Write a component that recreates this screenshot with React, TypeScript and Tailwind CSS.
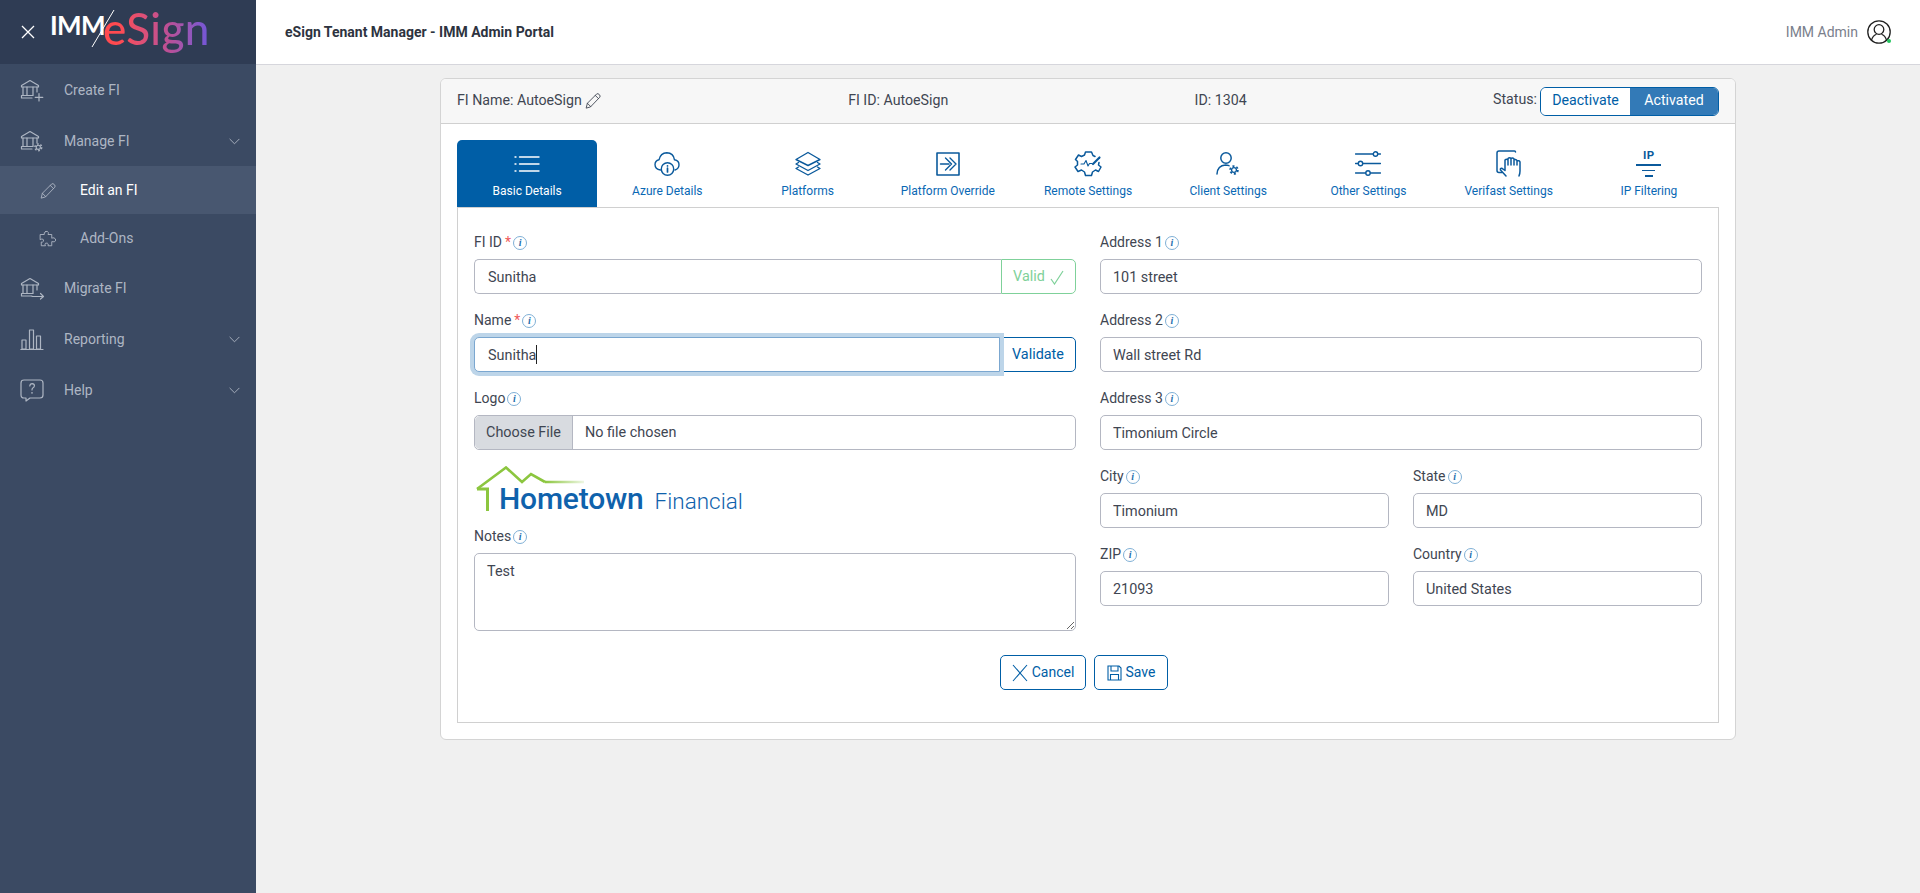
import React from "react";

const font = { fontFamily: "Roboto, sans-serif" };

function Svg({ size = 24, w, h, vb = "0 0 24 24", sw = 1.4, children, className = "" }: any) {
  return (
    <svg width={w ?? size} height={h ?? size} viewBox={vb} fill="none" stroke="currentColor" strokeWidth={sw} strokeLinecap="round" strokeLinejoin="round" className={className}>
      {children}
    </svg>
  );
}

const Gear = ({ cx, cy, k = 1 }: { cx: number; cy: number; k?: number }) => (
  <>
    <circle cx={cx} cy={cy} r={2.1 * k} strokeWidth={1.1 * k} />
    <circle cx={cx} cy={cy} r={3.4 * k} strokeWidth={1.5 * k} strokeDasharray={`${1.78 * k} ${1.78 * k}`} strokeLinecap="butt" />
  </>
);

const BankBase = () => (
  <>
    <path d="M1.5 7.5 L10 2.5 L18.5 7.5 V9 H1.5 Z" />
    <path d="M3 9 V17 M7 9 V17 M13 9 V17 M17 9 V14" />
    <path d="M1.5 17.5 H13 M1.5 17.5 V20 H12" />
  </>
);
const IconCreate = () => (
  <Svg w={24} h={24} vb="0 0 24 24" sw={1.2}>
    <BankBase />
    <path d="M19 15.5 V23 M15.2 19.3 H22.8" />
  </Svg>
);
const IconManage = () => (
  <Svg w={24} h={24} sw={1.2}>
    <BankBase />
    <Gear cx={18.3} cy={18.3} />
  </Svg>
);
const IconMigrate = () => (
  <Svg w={26} h={24} vb="0 0 26 24" sw={1.2}>
    <BankBase />
    <path d="M12 20.5 H23.5 M20.5 17.5 L23.5 20.5 L20.5 23" />
  </Svg>
);
const IconReport = () => (
  <Svg w={24} h={24} sw={1.2}>
    <path d="M2 13 H6 V22 H2 Z M9.5 3 H13.5 V22 H9.5 Z M16.5 9 H20.5 V22 H16.5 Z M.8 22.5 H23" />
  </Svg>
);
const IconHelp = () => (
  <Svg w={24} h={24} sw={1.2}>
    <path d="M4 2 H20 Q23 2 23 5 V17 Q23 20 20 20 H10 L6 23 V20 H4 Q1 20 1 17 V5 Q1 2 4 2 Z" />
    <path d="M9.8 8 Q10 5.6 12.2 5.6 Q14.4 5.7 14.4 7.8 Q14.4 9.2 12.8 10 Q12 10.5 12 12" />
    <path d="M12 14.8 V15" strokeWidth={1.6} />
  </Svg>
);
const IconPencil = ({ size = 18 }: { size?: number }) => (
  <Svg size={size} sw={1.2}>
    <path d="M3 21 L4.5 15 L17 2.5 Q18.5 1.5 20.5 3.5 Q22.3 5.5 21 7 L9 19.5 Z" />
    <path d="M15 4.5 L19.3 8.8 M4.5 15 L9 19.5" />
  </Svg>
);
const IconPuzzle = () => (
  <Svg size={18} sw={1.2}>
    <path d="M9 2 Q12 1 12.5 3.5 Q12.5 5 12 6 H17 V11 Q18 10.3 20 10.5 Q23 11.5 22 14.5 Q21 16.5 17 15.5 V21 H12 Q13 18 11 17.5 Q8 17 8 19 Q8 20 8.7 21 H3 V16 Q5 16.5 6 15 Q6.5 12 4 12 Q3 12 1.5 13 V6 H7 Q6 3 9 2 Z" />
  </Svg>
);
const Chevron = () => (
  <Svg size={11} sw={1} vb="0 0 12 12">
    <path d="M1 3.5 L6 8.5 L11 3.5" />
  </Svg>
);

function SideItem({ icon, label, chevron }: { icon: React.ReactNode; label: string; chevron?: boolean }) {
  return (
    <div className="flex h-[51px] items-center pl-[20px] pr-[16px] pt-px text-[14px] text-[#aeb6c3]">
      <span className="flex w-[44px] shrink-0 items-center">{icon}</span>
      <span className="flex-1">{label}</span>
      {chevron && <Chevron />}
    </div>
  );
}
function SubItem({ icon, label, active }: { icon: React.ReactNode; label: string; active?: boolean }) {
  return (
    <div className={`flex h-[48px] items-center pl-[39px] pt-px text-[14px] ${active ? "bg-[#485770] text-white" : "text-[#aeb6c3]"}`}>
      <span className={`flex w-[41px] shrink-0 items-center ${active ? "text-[#aeb6c3]" : ""}`}>{icon}</span>
      <span>{label}</span>
    </div>
  );
}

function Logo() {
  return (
    <div className="relative ml-[15px] flex h-[64px] w-[160px] items-start" style={{ fontFamily: "Lato, sans-serif" }}>
      <span className="mt-[10px] text-[26px] font-bold leading-[30px] tracking-[-0.6px] text-white">IMM</span>
      <svg width="24" height="39" viewBox="0 0 24 39" className="absolute left-[41px] top-[9px]">
        <path d="M1 38 L23 1" stroke="#fff" strokeWidth="1" />
      </svg>
      <span className="-ml-[2px] mt-[3px] bg-linear-to-r from-[#ff4a50] from-[15%] via-[#b94f97] via-[62%] to-[#6f55db] bg-clip-text text-[44px] font-medium leading-[50px] tracking-[0.4px] text-transparent">eSign</span>
    </div>
  );
}

function Sidebar() {
  return (
    <aside className="w-[256px] shrink-0 bg-[#3b4a63]" style={font}>
      <div className="flex h-[64px] items-center bg-[#2f3c54] pl-[21px]">
        <svg width="14" height="14" viewBox="0 0 14 14" stroke="#fff" strokeWidth="1.3" className="shrink-0">
          <path d="M1 1 L13 13 M13 1 L1 13" />
        </svg>
        <Logo />
      </div>
      <SideItem icon={<IconCreate />} label="Create FI" />
      <SideItem icon={<IconManage />} label="Manage FI" chevron />
      <SubItem icon={<IconPencil />} label="Edit an FI" active />
      <SubItem icon={<IconPuzzle />} label="Add-Ons" />
      <SideItem icon={<IconMigrate />} label="Migrate FI" />
      <SideItem icon={<IconReport />} label="Reporting" chevron />
      <SideItem icon={<IconHelp />} label="Help" chevron />
    </aside>
  );
}

const tabs: { label: string; icon: React.ReactNode }[] = [
  {
    label: "Basic Details",
    icon: (
      <Svg w={26} h={26} vb="0 0 26 26" sw={1.4}>
        <path d="M1 6 H2 M1 13 H2 M1 20 H2 M5.5 6 H25 M5.5 13 H25 M5.5 20 H25" />
      </Svg>
    ),
  },
  {
    label: "Azure Details",
    icon: (
      <Svg w={26} h={26} vb="0 0 26 26" sw={1.4}>
        <path d="M6.5 19 Q1 18.2 1 13.6 Q1 9.8 5 8.8 Q6.5 2 12.8 1.8 Q19.5 2 20.5 8.8 Q25.2 9.8 25 14 Q24.8 17.8 21 19" />
        <circle cx="13.5" cy="18" r="6.2" />
        <path d="M13.5 17.2 V21 M13.5 14.8 V15" strokeWidth={1.7} />
      </Svg>
    ),
  },
  {
    label: "Platforms",
    icon: (
      <Svg w={26} h={26} vb="0 0 26 26" sw={1.4}>
        <path d="M13 1.5 L25 8.5 L13 14.5 L1 8.5 Z" />
        <path d="M3.5 11.5 L1 13 L13 19.5 L25 13 L22.5 11.5" />
        <path d="M3.5 16 L1 17.5 L13 24 L25 17.5 L22.5 16" />
      </Svg>
    ),
  },
  {
    label: "Platform Override",
    icon: (
      <Svg w={24} h={24} vb="0 0 24 24" sw={1.4}>
        <path d="M1 1 H23 V23 H1 Z" strokeWidth={1.6} />
        <path d="M4.5 12 H13 M9.5 6 L15.5 12 L9.5 18 M14 6 L20 12 L14 18" />
      </Svg>
    ),
  },
  {
    label: "Remote Settings",
    icon: (
      <Svg w={28} h={27} vb="0 0 28 27" sw={1.5}>
        <path d="M21 6.5 L19 5.5 L17.5 2 H11.5 L10.5 5 L7.5 6.5 L4.5 5 L1.5 9.5 L3.5 11.5 V15 L1 17 L4 21.5 L7.5 20 L10.5 22 L11.5 25.5 H17.5 L18.5 22 L21.5 20 L24.5 21.5 L27 17 L24.5 15 L25 12.5" />
        <path d="M7 14 H10 L12 10.5 L14 16 L15.5 13.5 H18" strokeWidth={1.1} />
        <path d="M19 14 L25.5 7.5" strokeWidth={2.2} />
      </Svg>
    ),
  },
  {
    label: "Client Settings",
    icon: (
      <Svg w={24} h={25} vb="0 0 24 25" sw={1.5}>
        <circle cx="10" cy="7" r="5.2" />
        <path d="M1 23 Q1.5 14.5 9.5 14 Q11.5 14 13 14.6" />
        <Gear cx={18} cy={19} k={1.15} />
      </Svg>
    ),
  },
  {
    label: "Other Settings",
    icon: (
      <Svg w={26} h={25} vb="0 0 26 25" sw={1.4}>
        <path d="M0.5 3 H18 M23 3 H25.5 M0.5 12.5 H3 M8 12.5 H25.5 M0.5 22 H10.5 M15.5 22 H25.5" />
        <circle cx="20.5" cy="3" r="2.2" />
        <circle cx="5.5" cy="12.5" r="2.2" />
        <circle cx="13" cy="22" r="2.2" />
      </Svg>
    ),
  },
  {
    label: "Verifast Settings",
    icon: (
      <Svg w={25} h={27} vb="0 0 25 27" sw={1.5}>
        <path d="M6 22.5 H3 Q1 22.5 1 20.5 V3 Q1 1 3 1 H18.5 Q19.5 1 19.5 2" />
        <path d="M10 26 L4.5 20 Q4 18 6 18.3 L9 20.5 V10 Q10.5 8.5 12 10 V15 M12 15 V8.5 Q13.5 7 15 8.5 V15 M15 15 V8.5 Q16.5 7.2 18 8.8 V15 M18 15 V10 Q19.5 9 21 10.5 V15 M21 11 Q23.5 10 24 12 V21 Q24 23.5 23 26" />
      </Svg>
    ),
  },
  {
    label: "IP Filtering",
    icon: (
      <div className="flex w-[26px] flex-col items-center">
        <span className="text-[11.5px] font-bold leading-[11px] tracking-[0.5px]">IP</span>
        <span className="mt-[3px] h-[1.5px] w-[25px] bg-[#0b5a9c]" />
        <span className="mt-[4px] h-[1.5px] w-[13px] bg-[#0b5a9c]" />
        <span className="mt-[4px] h-[1.5px] w-[8px] bg-[#0b5a9c]" />
      </div>
    ),
  },
];

function Info() {
  return (
    <span className="ml-[2px] inline-flex h-[14px] w-[14px] items-center justify-center rounded-full border border-[#7fb0d6] text-[10px] font-bold italic leading-none text-[#1f6fae]" style={{ fontFamily: '"Liberation Serif", serif' }}>
      i
    </span>
  );
}

function Label({ text, req }: { text: string; req?: boolean }) {
  return (
    <div className="mb-[6px] flex h-[21px] items-center text-[14px] leading-[21px] text-[#3f4652]">
      <span>{text}</span>
      {req && <span className="ml-[3px] text-[#ef5a5a]">*</span>}
      <Info />
    </div>
  );
}

const inputCls = "h-[35px] w-full rounded-[5px] border border-[#b4b7c2] bg-white px-[12px] pt-px text-[14.4px] text-[#3f4652] outline-none";

function Field({ label, value }: { label: string; value: string }) {
  return (
    <div className="mb-[16px]">
      <Label text={label} />
      <input className={inputCls} style={font} defaultValue={value} readOnly />
    </div>
  );
}

function Form() {
  return (
    <div className="grid grid-cols-2 gap-x-[24px]">
      <div>
        <div className="mb-[16px]">
          <Label text="FI ID" req />
          <div className="flex h-[35px]">
            <input className="h-full min-w-0 flex-1 rounded-l-[5px] border border-r-0 border-[#b4b7c2] bg-white pl-[13px] pr-[12px] pt-px text-[14.4px] text-[#3f4652] outline-none" style={font} defaultValue="Sunitha" readOnly />
            <div className="flex h-full w-[75px] items-center justify-center gap-[5px] rounded-r-[5px] border border-[#7fd19a] pt-px text-[14.4px] text-[#7fd19a]">
              Valid
              <svg width="14" height="15" viewBox="0 0 14 15" fill="none" stroke="#7fd19a" strokeWidth="1.2"><path d="M1 9 L4.5 14 L13 1" /></svg>
            </div>
          </div>
        </div>
        <div className="mb-[16px]">
          <Label text="Name" req />
          <div className="flex h-[35px]">
            <div className="relative z-10 min-w-0 flex-1">
              <input className="h-[35px] w-full rounded-l-[5px] border border-[#7ba7d0] bg-white pl-[13px] pr-[12px] pt-px text-[14.4px] text-[#3f4652] shadow-[0_0_0_4px_#bdd5e9] outline-none" style={font} defaultValue="Sunitha" readOnly />
              <span className="absolute left-[62px] top-[8px] h-[19px] w-px bg-[#222]" />
            </div>
            <div className="flex h-full w-[76px] items-center justify-center rounded-r-[5px] border border-[#005ea6] pt-px text-[14.4px] text-[#005ea6]">Validate</div>
          </div>
        </div>
        <div className="mb-[16px]">
          <Label text="Logo" />
          <input
            type="file"
            style={font}
            className="block h-[35px] w-full cursor-pointer rounded-[5px] border border-[#b4b7c2] bg-white text-[14.4px] leading-[33px] text-[#3f4652] file:mr-[12px] file:h-[33px] file:w-[98px] file:cursor-pointer file:rounded-l-[5px] file:border-0 file:border-r file:border-solid file:border-[#b4b7c2] file:bg-[#d8dbe0] file:text-[14.4px] file:text-[#3f4652]"
          />
        </div>
        <div className="relative mb-[14px] h-[46px] text-[#0f62ac]">
          <svg width="120" height="46" viewBox="0 0 120 46" fill="none" className="absolute left-[2px] top-[0px]">
            <defs>
              <linearGradient id="fade" gradientUnits="userSpaceOnUse" x1="69" y1="0" x2="108" y2="0">
                <stop offset="0" stopColor="#8cc63f" />
                <stop offset="1" stopColor="#8cc63f" stopOpacity="0.15" />
              </linearGradient>
            </defs>
            <path d="M1 23 L30 1.5 L46 16 L55 8 L69 16" stroke="#8cc63f" strokeWidth="2.6" strokeLinejoin="miter" />
            <path d="M69 16 H108" stroke="url(#fade)" strokeWidth="2.4" />
            <path d="M1 23 H11.5 V45" stroke="#8cc63f" strokeWidth="3" />
          </svg>
          <div className="flex items-baseline pl-[25px] pt-[17px]">
            <span className="text-[30px] font-medium leading-[32px] tracking-[-0.2px]">Hometown</span>
            <span className="ml-[11px] text-[22.5px] font-light leading-[32px]">Financial</span>
          </div>
        </div>
        <Label text="Notes" />
        <textarea className="block h-[78px] w-full rounded-[5px] border border-[#b4b7c2] bg-white px-[12px] pb-[6px] pt-[7px] text-[14.4px] leading-[21px] text-[#3f4652] outline-none" style={font} defaultValue="Test" readOnly />
      </div>
      <div>
        <Field label="Address 1" value="101 street" />
        <Field label="Address 2" value="Wall street Rd" />
        <Field label="Address 3" value="Timonium Circle" />
        <div className="grid grid-cols-2 gap-x-[24px]">
          <Field label="City" value="Timonium" />
          <Field label="State" value="MD" />
          <Field label="ZIP" value="21093" />
          <Field label="Country" value="United States" />
        </div>
      </div>
    </div>
  );
}

export default function App() {
  return (
    <div className="flex min-h-screen bg-[#f0f0f0] text-[14px]" style={font}>
      <Sidebar />
      <main className="min-w-0 flex-1">
        <header className="flex h-[65px] items-center justify-between border-b border-[#d6d6dc] bg-white pl-[29px] pr-[29px]">
          <div className="text-[14px] font-bold text-[#2d3340]">eSign Tenant Manager - IMM Admin Portal</div>
          <div className="flex items-center gap-[9px] text-[14px] text-[#7a808c]">
            <span>IMM Admin</span>
            <div className="relative h-[24px] w-[24px] text-[#222]">
              <Svg size={24} sw={1.3}>
                <circle cx="12" cy="12" r="11.2" />
                <circle cx="12" cy="9.5" r="4.8" />
                <path d="M4.5 20 Q6 15.5 9 14.5 M19.5 20 Q18 15.5 15 14.5" />
              </Svg>
              <span className="absolute bottom-[1px] right-0 h-[4px] w-[4px] rounded-full bg-[#22c55e]" />
            </div>
          </div>
        </header>
        <section className="mx-auto mt-[13px] w-[1296px] overflow-hidden rounded-[6px] border border-[#d4d4d4] bg-white">
          <div className="flex h-[45px] items-center justify-between border-b border-[#d0d0d0] bg-[#f7f7f7] pl-[16px] pr-[16px] text-[14.2px] text-[#3f4652]">
            <div className="flex items-center gap-[2px]">
              <span>FI Name: AutoeSign</span>
              <IconPencil size={18} />
            </div>
            <span>FI ID: AutoeSign</span>
            <span>ID: 1304</span>
            <div className="flex items-center gap-[3px]">
              <span className="-mt-[3px]">Status:</span>
              <div className="flex h-[29px] w-[179px] overflow-hidden rounded-[6px] border border-[#005ea6]">
                <div className="flex w-[89px] items-center justify-center bg-white text-[#005ea6]">Deactivate</div>
                <div className="flex flex-1 items-center justify-center bg-[#337ab7] text-white">Activated</div>
              </div>
            </div>
          </div>
          <div className="px-[16px] pb-[16px] pt-[16px]">
            <div className="grid grid-cols-9">
              {tabs.map((t, i) => (
                <div key={t.label} className={`flex h-[67px] flex-col items-center rounded-t-[5px] ${i === 0 ? "bg-[#005ea6] text-white" : "text-[#0b5a9c]"}`}>
                  <div className="flex h-[43px] items-center justify-center pt-[4px]">{t.icon}</div>
                  <div className={`text-[12px] leading-[16px] ${i === 0 ? "text-white" : "text-[#0a68b4]"}`}>{t.label}</div>
                </div>
              ))}
            </div>
            <div className="border border-[#d0d0d0] px-[16px] pb-[32px] pt-[24px]">
              <Form />
              <div className="mt-[24px] flex justify-center gap-[8px] pr-[8px]">
                <button className="flex h-[35px] w-[86px] items-center justify-center gap-[4px] rounded-[5px] border border-[#005ea6] text-[14px] text-[#005ea6]">
                  <svg width="16" height="18" viewBox="0 0 16 18" fill="none" stroke="#005ea6" strokeWidth="1.1"><path d="M1 1 L15 17 M15 1 L1 17" /></svg>
                  Cancel
                </button>
                <button className="flex h-[35px] w-[74px] items-center justify-center gap-[4px] rounded-[5px] border border-[#005ea6] text-[14px] text-[#005ea6]">
                  <svg width="15" height="16" viewBox="0 0 15 16" fill="none" stroke="#005ea6" strokeWidth="1.1"><path d="M1 1 H12 L14 3 V15 H1 Z M4 1 V6 H11 V1 M3.5 15 V9.5 H11.5 V15" /></svg>
                  Save
                </button>
              </div>
            </div>
          </div>
        </section>
      </main>
    </div>
  );
}
